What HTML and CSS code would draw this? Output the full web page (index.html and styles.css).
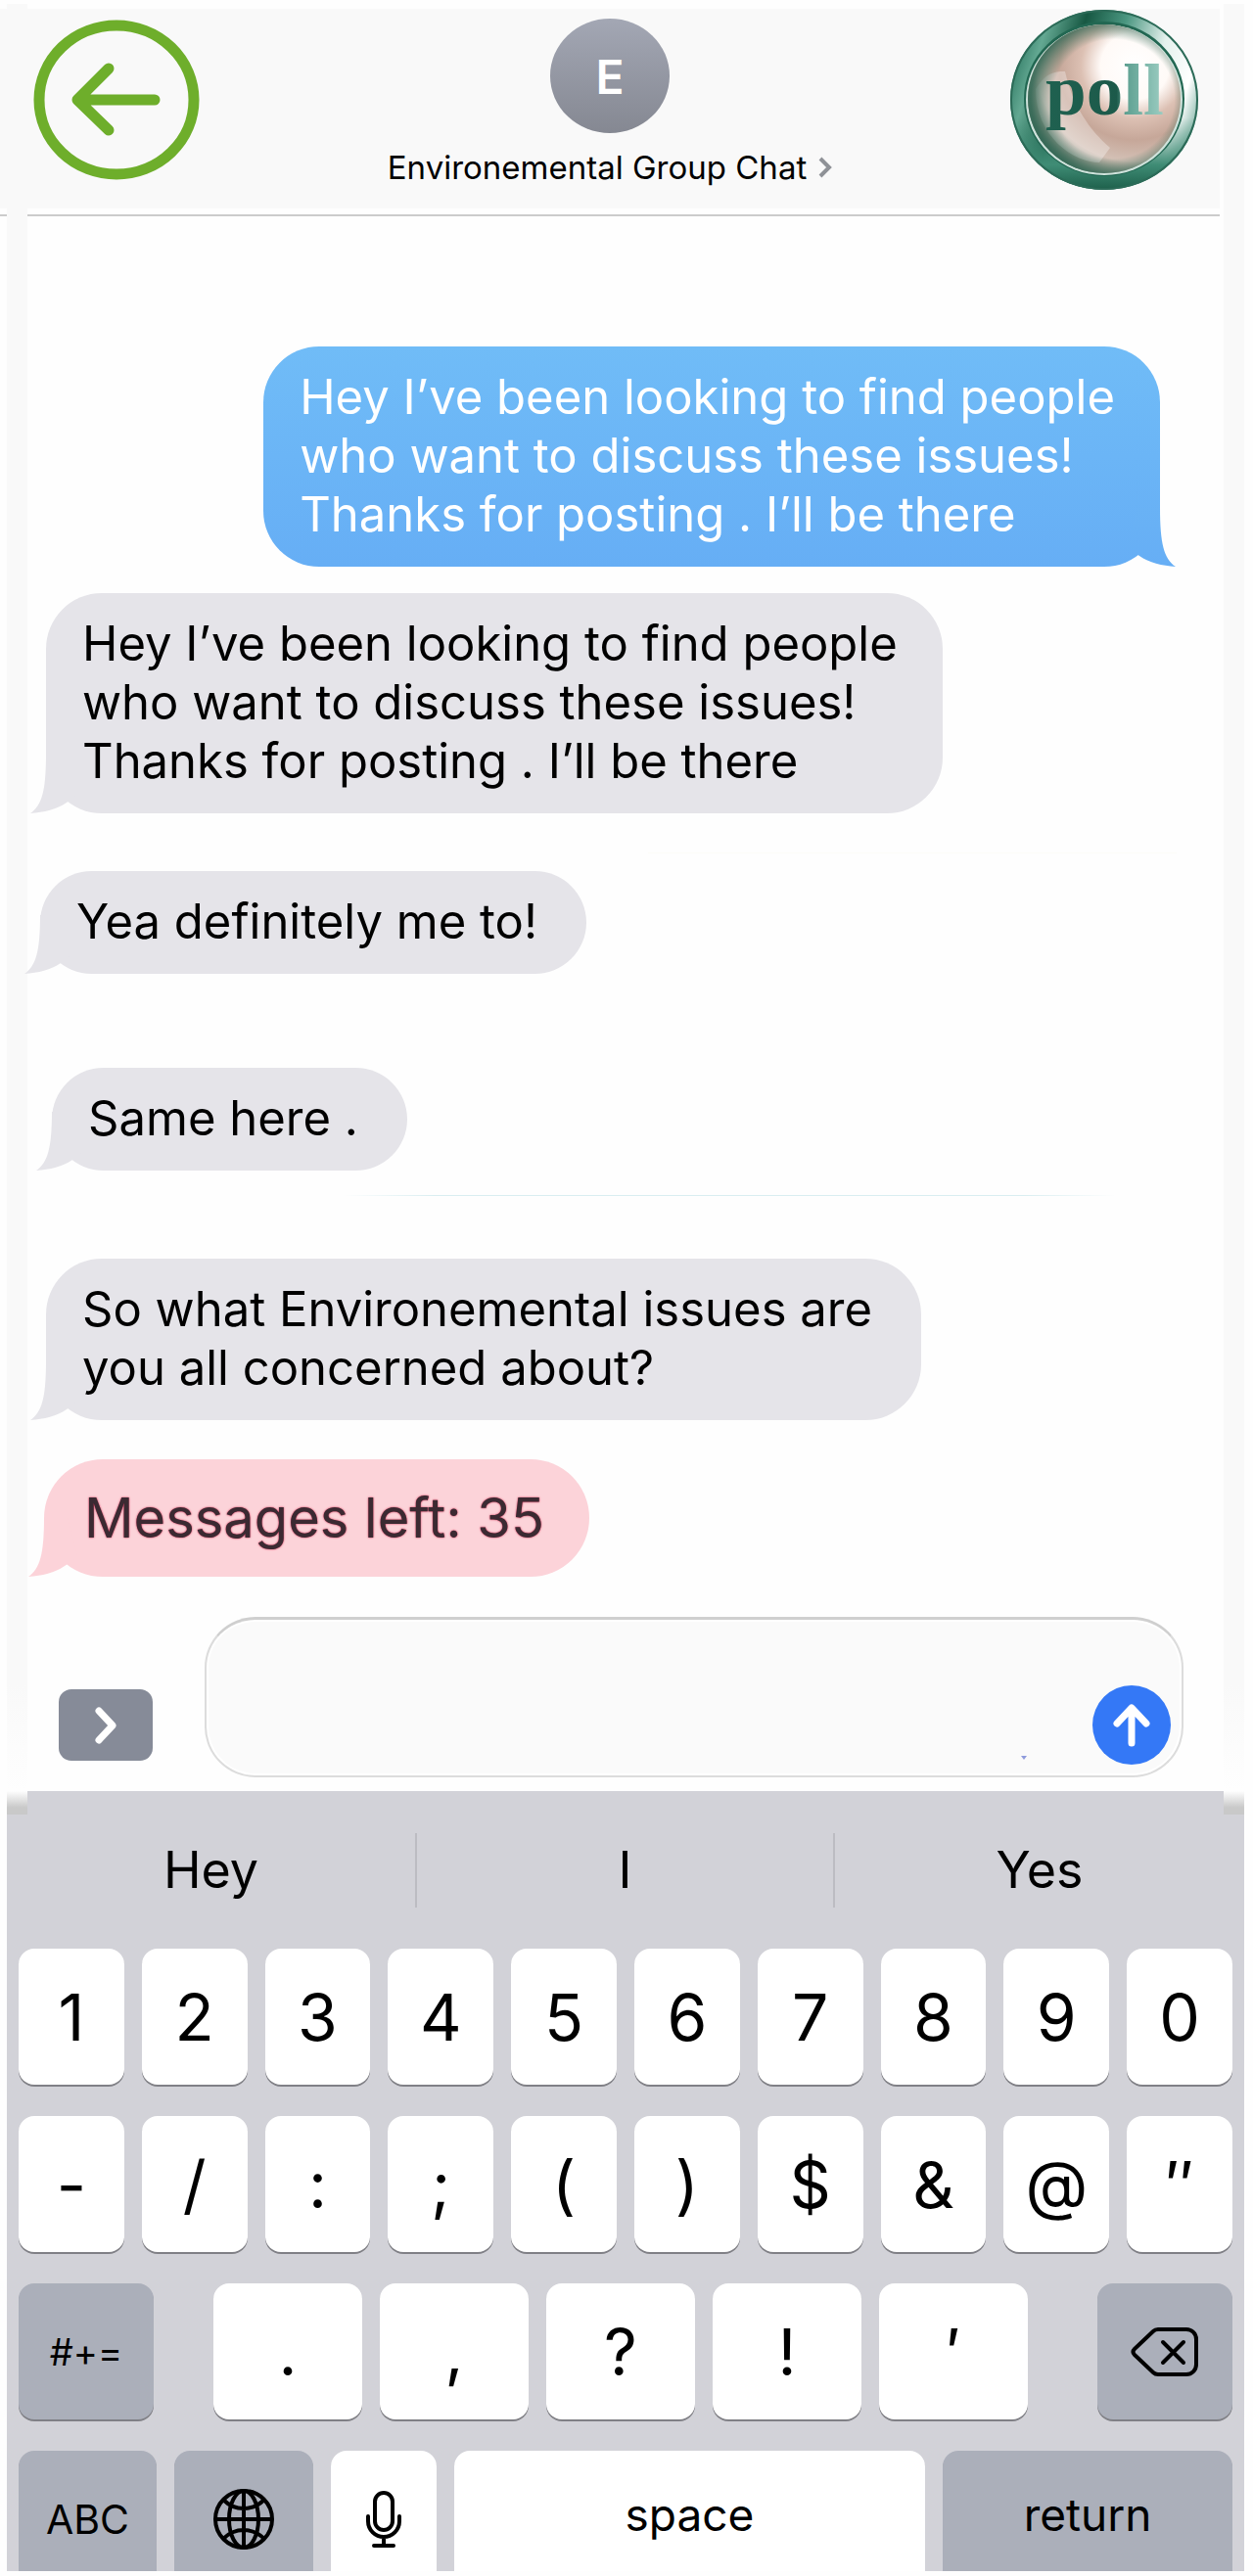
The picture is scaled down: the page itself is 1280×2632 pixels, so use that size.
FILE: index.html
```html
<!DOCTYPE html>
<html lang="en">
<head>
<meta charset="utf-8">
<meta name="viewport" content="width=device-width, initial-scale=1">
<title>Environemental Group Chat</title>
<link rel="stylesheet" href="styles.css">
</head>
<body>
<div class="phone">
  <header class="header">
    <button class="back" aria-label="Back">
      <svg viewBox="0 0 170 164" width="170" height="164" fill="none" stroke="#6eae2b" stroke-width="11" stroke-linecap="round" stroke-linejoin="round">
        <ellipse cx="85" cy="82" rx="79" ry="76"/>
        <path d="M124 82H45M77 50L45 82l32 31"/>
      </svg>
    </button>
    <div class="contact">
      <div class="avatar">E</div>
      <a class="title" href="#">Environemental Group Chat
        <svg viewBox="0 0 14 22" width="14" height="22" fill="none" stroke="#8f9297" stroke-width="4"><path d="M2 2l9 9-9 9"/></svg>
      </a>
    </div>
    <button class="poll" aria-label="poll">
      <svg viewBox="0 0 194 186" width="194" height="186">
        <defs>
          <linearGradient id="rim" x1="0" y1="0.3" x2="1" y2="0.6">
            <stop offset="0" stop-color="#2f7a64"/><stop offset=".12" stop-color="#63a892"/><stop offset=".3" stop-color="#175843"/>
            <stop offset=".5" stop-color="#4b9781"/><stop offset=".72" stop-color="#e4f1ed"/><stop offset=".9" stop-color="#ffffff"/><stop offset="1" stop-color="#8dbbae"/>
          </linearGradient>
          <linearGradient id="rimLow" x1="0" y1="0" x2="0" y2="1">
            <stop offset=".6" stop-color="#3f8c75" stop-opacity="0"/><stop offset=".86" stop-color="#3f8c75"/><stop offset="1" stop-color="#1d604b"/>
          </linearGradient>
          <radialGradient id="face" cx=".7" cy=".28" r=".8">
            <stop offset="0" stop-color="#ffffff"/><stop offset=".28" stop-color="#fffaf7"/><stop offset=".44" stop-color="#dcc0b3"/>
            <stop offset=".62" stop-color="#c6a799"/><stop offset=".8" stop-color="#d3c0b5"/><stop offset="1" stop-color="#557565"/>
          </radialGradient>
          <radialGradient id="edge" cx=".56" cy=".5" r=".54">
            <stop offset=".74" stop-color="#2f6653" stop-opacity="0"/><stop offset="1" stop-color="#2f6653" stop-opacity=".85"/>
          </radialGradient>
          <linearGradient id="ink" x1="37" y1="0" x2="158" y2="0" gradientUnits="userSpaceOnUse">
            <stop offset="0" stop-color="#1f6150"/><stop offset=".6" stop-color="#1c5a4a"/><stop offset=".68" stop-color="#5fa192"/><stop offset="1" stop-color="#9ccdc2"/>
          </linearGradient>
        </defs>
        <ellipse cx="97" cy="93" rx="96" ry="92" fill="url(#rim)"/>
        <ellipse cx="97" cy="93" rx="96" ry="92" fill="url(#rimLow)"/>
        <ellipse cx="97" cy="93" rx="95" ry="91" fill="none" stroke="#2c6b58" stroke-width="2"/>
        <ellipse cx="97" cy="92" rx="82" ry="79" fill="#226752"/>
        <ellipse cx="97" cy="93" rx="80" ry="77" fill="#cfe3dc"/>
        <ellipse cx="97" cy="92" rx="78" ry="76" fill="url(#face)"/>
        <path d="M27 82c10-16 18-18 30-18 8 35 25 60 46 78l-11 15c-26 0-65-26-65-75z" fill="#fff" opacity=".32"/>
        <ellipse cx="97" cy="92" rx="78" ry="76" fill="url(#edge)"/>
        <text x="37" y="108" class="poll-text" fill="url(#ink)">poll</text>
      </svg>
    </button>
  </header>
  <div class="rule"></div>

  <main class="thread">
    <p class="bubble sent">Hey I’ve been looking to find people<br>who want to discuss these issues!<br>Thanks for posting . I’ll be there
      <svg class="tail" viewBox="0 0 60 60" width="60" height="60"><defs><linearGradient id="blue" x1="0" y1="0" x2="0" y2="1"><stop offset="0" stop-color="#69b2f5"/><stop offset="1" stop-color="#66aef5"/></linearGradient></defs><path fill="url(#blue)" d="M44 0C44 36 48 52 60 60 46 59 33 56 23 49L10 40 20 0z"/></svg></p>
    <p class="bubble second">Hey I’ve been looking to find people<br>who want to discuss these issues!<br>Thanks for posting . I’ll be there
      <svg class="tail" viewBox="0 0 60 60" width="60" height="60"><path d="M16 0C16 36 12 52 0 60 14 59 27 56 37 49L50 40 40 0z"/></svg></p>
    <hr class="seam pale">
    <p class="bubble third">Yea definitely me to!
      <svg class="tail" viewBox="0 0 60 60" width="60" height="60"><path d="M16 0C16 36 12 52 0 60 14 59 27 56 37 49L50 40 40 0z"/></svg></p>
    <p class="bubble fourth">Same here .
      <svg class="tail" viewBox="0 0 60 60" width="60" height="60"><path d="M16 0C16 36 12 52 0 60 14 59 27 56 37 49L50 40 40 0z"/></svg></p>
    <hr class="seam">
    <p class="bubble fifth">So what Environemental issues are<br>you all concerned about?
      <svg class="tail" viewBox="0 0 60 60" width="60" height="60"><path d="M16 0C16 36 12 52 0 60 14 59 27 56 37 49L50 40 40 0z"/></svg></p>
    <p class="bubble notice">Messages left: 35
      <svg class="tail" viewBox="0 0 60 60" width="60" height="60"><path d="M16 0C16 36 12 52 0 60 14 59 27 56 37 49L50 40 40 0z"/></svg></p>
  </main>

  <form class="composer">
    <button type="button" class="expand" aria-label="Show apps">
      <svg viewBox="0 0 24 40" width="24" height="40" fill="none" stroke="#fff" stroke-width="7" stroke-linecap="round" stroke-linejoin="round"><path d="M5 5l14 15L5 35"/></svg>
    </button>
    <div class="field">
      <textarea aria-label="Message"></textarea>
      <svg class="speck" viewBox="0 0 6 4" width="6" height="4"><path d="M0 0h6L3 4z" fill="#8f9bdc"/></svg>
      <button type="button" class="send" aria-label="Send">
        <svg viewBox="0 0 40 46" width="40" height="46" fill="none" stroke="#fff" stroke-width="7" stroke-linecap="round" stroke-linejoin="round"><path d="M20 41V6M5 21L20 5l15 16"/></svg>
      </button>
    </div>
  </form>

  <section class="keyboard" aria-label="Keyboard">
    <div class="suggestions">
      <button>Hey</button><button>I</button><button>Yes</button>
    </div>
    <div class="row ten">
      <button class="key">1</button><button class="key">2</button><button class="key">3</button><button class="key">4</button><button class="key">5</button><button class="key">6</button><button class="key">7</button><button class="key">8</button><button class="key">9</button><button class="key">0</button>
    </div>
    <div class="row ten">
      <button class="key">-</button><button class="key">/</button><button class="key">:</button><button class="key">;</button><button class="key">(</button><button class="key">)</button><button class="key">$</button><button class="key">&amp;</button><button class="key">@</button><button class="key">″</button>
    </div>
    <div class="row marks">
      <button class="key dark symbols">#+=</button>
      <div class="middle">
        <button class="key">.</button><button class="key">,</button><button class="key">?</button><button class="key">!</button><button class="key">′</button>
      </div>
      <button class="key dark" aria-label="Delete">
        <svg viewBox="0 0 72 54" width="72" height="54" fill="none" stroke="#000" stroke-width="4" stroke-linecap="round" stroke-linejoin="round"><path d="M29 4H58a10 10 0 0 1 10 10V40a10 10 0 0 1-10 10H29q-3 0-5-2L5 30q-3-3 0-6L24 6q2-2 5-2z"/><path d="M34 17l21 21M55 17L34 38"/></svg>
      </button>
    </div>
    <div class="row bottom">
      <button class="key dark abc">ABC</button>
      <button class="key dark" aria-label="Next keyboard">
        <svg viewBox="0 0 64 64" width="64" height="64" fill="none" stroke="#000" stroke-width="4"><circle cx="32" cy="32" r="29"/><ellipse cx="32" cy="32" rx="15" ry="29"/><path d="M32 3v58M3 32h58M11 12c12 12 30 12 42 0M11 52c12-12 30-12 42 0"/></svg>
      </button>
      <button class="key" aria-label="Dictate">
        <svg viewBox="0 0 38 60" width="38" height="60" fill="none" stroke="#000" stroke-width="4" stroke-linecap="round"><rect x="10" y="3" width="18" height="38" rx="9"/><path d="M3 27v5a16 16 0 0 0 32 0v-5M19 48v9M9 57h20"/></svg>
      </button>
      <button class="key word">space</button>
      <button class="key dark word">return</button>
    </div>
  </section>
</div>
</body>
</html>
```
FILE: styles.css
```css
* { box-sizing: border-box; }

body {
  margin: 0;
  background: #fefefe;
  color: #000;
  font-family: Inter, "Liberation Sans", sans-serif;
}

button {
  margin: 0;
  padding: 0;
  border: 0;
  background: none;
  color: inherit;
  font: inherit;
}

svg { display: block; }

/* The two pale rails run down both sides behind the conversation. */
.phone {
  padding: 9px 0 5px;
  background:
    linear-gradient(#f9f9f9 94%, #fefefe) left 7px top 4px / 21px 1826px no-repeat,
    linear-gradient(#f9f9f9 94%, #fefefe) right 9px top 4px / 21px 1826px no-repeat;
}

.header {
  display: grid;
  grid-template-columns: 1fr auto 1fr;
  align-items: start;
  height: 204px;
  margin-right: 34px;
  padding: 0 21px;
  background: #f9f9f9;
}

.back { justify-self: start; margin: 11px 0 0 13px; }
.poll { justify-self: end; }

.poll-text {
  font: bold 75px "Liberation Serif", serif;
}

.contact {
  display: flex;
  flex-direction: column;
  align-items: center;
  padding-top: 10px;
}

.avatar {
  width: 122px;
  height: 117px;
  border-radius: 50%;
  background: linear-gradient(#a3a7b4, #858892);
  color: #fff;
  font-size: 48px;
  font-weight: 600;
  line-height: 120px;
  text-align: center;
}

.title {
  display: flex;
  align-items: center;
  gap: 12px;
  margin-top: 15px;
  color: #000;
  font-size: 33px;
  line-height: 40px;
  text-decoration: none;
  white-space: nowrap;
}

.rule {
  height: 2px;
  margin: 6px 34px 0 0;
  background: linear-gradient(90deg, #ccc 7px, transparent 7px 28px, #ccc 28px);
}

.thread {
  display: flex;
  flex-direction: column;
  align-items: flex-start;
  padding: 133px 78px 0 47px;
}

.bubble {
  --fill: #e5e4e9;
  position: relative;
  margin: 0;
  padding: 22px 46px 23px 37px;
  border-radius: 57px;
  background: var(--fill);
  font-size: 49px;
  line-height: 60px;
  white-space: nowrap;
}

.tail {
  position: absolute;
  bottom: 0;
  left: -16px;
  fill: var(--fill);
}

.sent {
  align-self: flex-end;
  margin-right: 17px;
  background: linear-gradient(#70bcf7, #66aef5);
  color: #fff;
}

.sent .tail { right: -16px; left: auto; }

.second { margin-top: 27px; }
.third { margin: 18px 0 0 -6px; padding-right: 50px; }
.fourth { margin: 96px 0 0 6px; padding-right: 50px; }
.fifth { margin-top: 64px; padding-right: 50px; }

.notice {
  --fill: #fcd3d9;
  margin: 40px 0 0 -2px;
  padding: 26px 46px 26px 41px;
  border-radius: 60px;
  color: #3b2a32;
  font-size: 56px;
  line-height: 68px;
  text-shadow: 0 0 2px #c4103a;
}

.seam {
  align-self: flex-end;
  width: 790px;
  height: 1px;
  margin: 25px 62px 0 0;
  border: 0;
  background: linear-gradient(90deg, transparent, #d9eef1 12%, #d9eef1 88%, transparent);
}

.pale {
  width: 540px;
  margin: 40px 0 0;
  background: #fdfdf8;
}

.composer {
  display: flex;
  align-items: flex-end;
  gap: 53px;
  margin-top: 41px;
  padding: 0 71px 0 60px;
}

.expand {
  display: grid;
  place-items: center;
  width: 96px;
  height: 73px;
  margin-bottom: 17px;
  border-radius: 13px;
  background: #868b98;
}

.field {
  position: relative;
  flex: 1;
}

textarea {
  display: block;
  width: 100%;
  height: 164px;
  padding: 30px 100px 30px 40px;
  border: 2px solid #dcdcdc;
  border-top: 3px solid #cfcfcf;
  border-radius: 52px;
  outline: 0;
  background: #fafafa;
  box-shadow: inset 0 0 0 2px #fff;
  font: 48px/52px Inter, sans-serif;
  resize: none;
}

.speck { position: absolute; right: 160px; bottom: 18px; }

.send {
  position: absolute;
  right: 13px;
  bottom: 13px;
  display: grid;
  place-items: center;
  width: 80px;
  height: 81px;
  border-radius: 50%;
  background: #3478f6;
}

.keyboard {
  overflow: hidden;
  margin: 14px 9px 0 7px;
  padding: 0 12px;
  background:
    linear-gradient(#fefefe, #c9c9c9 70%) left top / 21px 24px no-repeat,
    linear-gradient(#fefefe, #c9c9c9 70%) right top / 21px 24px no-repeat,
    #d2d2d8;
}

.suggestions {
  display: grid;
  grid-template-columns: 417fr 427fr 420fr;
  margin: 43px -12px 42px;
}

.suggestions button {
  height: 76px;
  font-size: 52px;
  line-height: 76px;
}

.suggestions button + button { border-left: 2px solid #bcbcc2; }

.row {
  display: grid;
  gap: 18px;
  height: 139px;
  margin-bottom: 32px;
}

.ten { grid-template-columns: repeat(10, 1fr); }
.marks { grid-template-columns: 138fr 843fr 138fr; gap: 61px; }

.middle {
  display: grid;
  grid-template-columns: repeat(5, 1fr);
  gap: 18px;
  margin-right: 10px;
}

.bottom {
  grid-template-columns: 141fr 142fr 108fr 482fr 296fr;
  height: 123px;
  margin-bottom: 0;
}

.key {
  display: grid;
  place-content: center;
  min-width: 0;
  border-radius: 16px;
  background: #fff;
  box-shadow: 0 2px 0 #808086;
  font-size: 66px;
  line-height: 80px;
}

.bottom .key { height: 139px; }

.dark { background: #abafba; }
.symbols { font-size: 38px; }
.abc { font-size: 41px; }

.word {
  padding-bottom: 10px;
  font-size: 46px;
}
```
